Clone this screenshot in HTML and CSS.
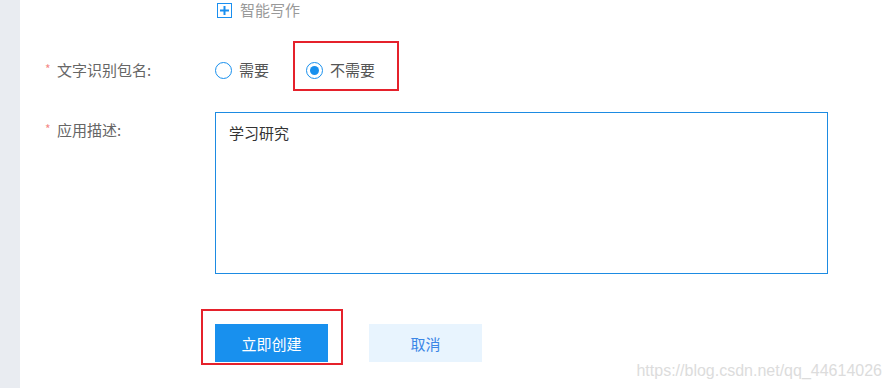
FILE: index.html
```html
<!DOCTYPE html>
<html lang="zh-CN">
<head>
<meta charset="utf-8">
<title>创建应用</title>
<link rel="stylesheet" href="styles.css">
</head>
<body>
<div class="page">
  <div class="sidebar"></div>
  <div class="main">
    <div class="row row-write">
      <div class="label"></div>
      <div class="control">
        <span class="plus-box">
          <svg width="15" height="15" viewBox="0 0 15 15"><rect x="0.5" y="0.5" width="14" height="14" fill="none" stroke="#1a8ff0" stroke-width="1"/><path d="M7.5 3v9M3 7.5h9" stroke="#1a8ff0" stroke-width="2"/></svg>
        </span>
        <span class="write-text">智能写作</span>
      </div>
    </div>

    <div class="row row-ocr">
      <div class="label"><span class="req">*</span><span class="label-text">文字识别包名:</span></div>
      <div class="control radios">
        <label class="radio">
          <span class="radio-circle"></span>
          <span>需要</span>
        </label>
        <label class="radio checked mark-box">
          <span class="radio-circle"><span class="radio-dot"></span></span>
          <span>不需要</span>
        </label>
      </div>
    </div>

    <div class="row row-desc">
      <div class="label label-top"><span class="req">*</span><span class="label-text">应用描述:</span></div>
      <div class="control">
        <textarea class="desc">学习研究</textarea>
      </div>
    </div>

    <div class="row row-actions">
      <div class="label"></div>
      <div class="control actions">
        <button class="btn btn-primary mark-btn">立即创建</button>
        <button class="btn btn-cancel">取消</button>
      </div>
    </div>
  </div>
  <div class="watermark">https://blog.csdn.net/qq_44614026</div>
</div>
</body>
</html>
```

FILE: styles.css
```css
* { box-sizing: border-box; }
html, body {
  margin: 0;
  padding: 0;
  background: #ffffff;
}
body {
  font-family: "Noto Sans CJK SC", "Liberation Sans", sans-serif;
  font-size: 15px;
  color: #666666;
}
.page {
  position: relative;
  display: flex;
  height: 388px;
  overflow: hidden;
}
.sidebar {
  width: 20px;
  flex: none;
  background: #e9ecf1;
}
.main {
  flex: 1;
  padding-left: 25px;
}
.row {
  display: flex;
  align-items: center;
}
.label {
  width: 170px;
  flex: none;
  display: flex;
  align-items: center;
  line-height: 20px;
}
.label-top {
  align-self: flex-start;
  padding-top: 8px;
}
.req {
  width: 12px;
  color: #f58a8a;
  font-size: 12px;
  line-height: 12px;
  position: relative;
  top: -1px;
}
.label-text {
  color: #666666;
}
.control {
  display: flex;
  align-items: center;
}
.row-write {
  height: 20px;
}
.plus-box {
  display: flex;
  margin-left: 2px;
}
.write-text {
  margin-left: 8px;
  color: #999999;
  line-height: 20px;
}
.row-ocr {
  margin-top: 40px;
  height: 20px;
}
.radio {
  display: flex;
  align-items: center;
  line-height: 20px;
  color: #555555;
  margin-right: 37px;
}
.radio.checked {
  margin-right: 0;
}
.radio-circle {
  width: 17px;
  height: 17px;
  border: 1.5px solid #1890ee;
  border-radius: 50%;
  display: flex;
  align-items: center;
  justify-content: center;
  margin-right: 7px;
}
.radio-dot {
  width: 9px;
  height: 9px;
  border-radius: 50%;
  background: #1890ee;
}
.mark-box {
  position: relative;
}
.mark-box::after {
  content: "";
  position: absolute;
  top: -19px;
  bottom: -11px;
  left: -13px;
  right: -24px;
  border: 2px solid #e5212b;
}
.row-desc {
  margin-top: 32px;
  align-items: flex-start;
}
.desc {
  width: 613px;
  height: 162px;
  border: 1px solid #1d8be2;
  outline: none;
  resize: none;
  padding: 10px 13px;
  font-family: "Noto Sans CJK SC", "Liberation Sans", sans-serif;
  font-size: 15px;
  line-height: 20px;
  color: #333333;
  background: #ffffff;
  display: block;
}
.row-actions {
  margin-top: 50px;
}
.actions {
  gap: 41px;
}
.btn {
  width: 113px;
  height: 38px;
  border: none;
  font-family: "Noto Sans CJK SC", "Liberation Sans", sans-serif;
  font-size: 15px;
  padding: 0;
  cursor: pointer;
}
.btn-primary {
  background: #1890ee;
  color: #ffffff;
}
.btn-cancel {
  background: #e8f4fe;
  color: #3a86e6;
}
.mark-btn {
  position: relative;
}
.mark-btn::after {
  content: "";
  position: absolute;
  top: -15px;
  bottom: -3px;
  left: -14px;
  right: -15px;
  border: 2px solid #e5212b;
}
.watermark {
  position: absolute;
  right: 10px;
  bottom: 8px;
  font-family: "Liberation Sans", Arial, sans-serif;
  font-size: 16px;
  color: #dcdcdc;
  line-height: 18px;
}
```
